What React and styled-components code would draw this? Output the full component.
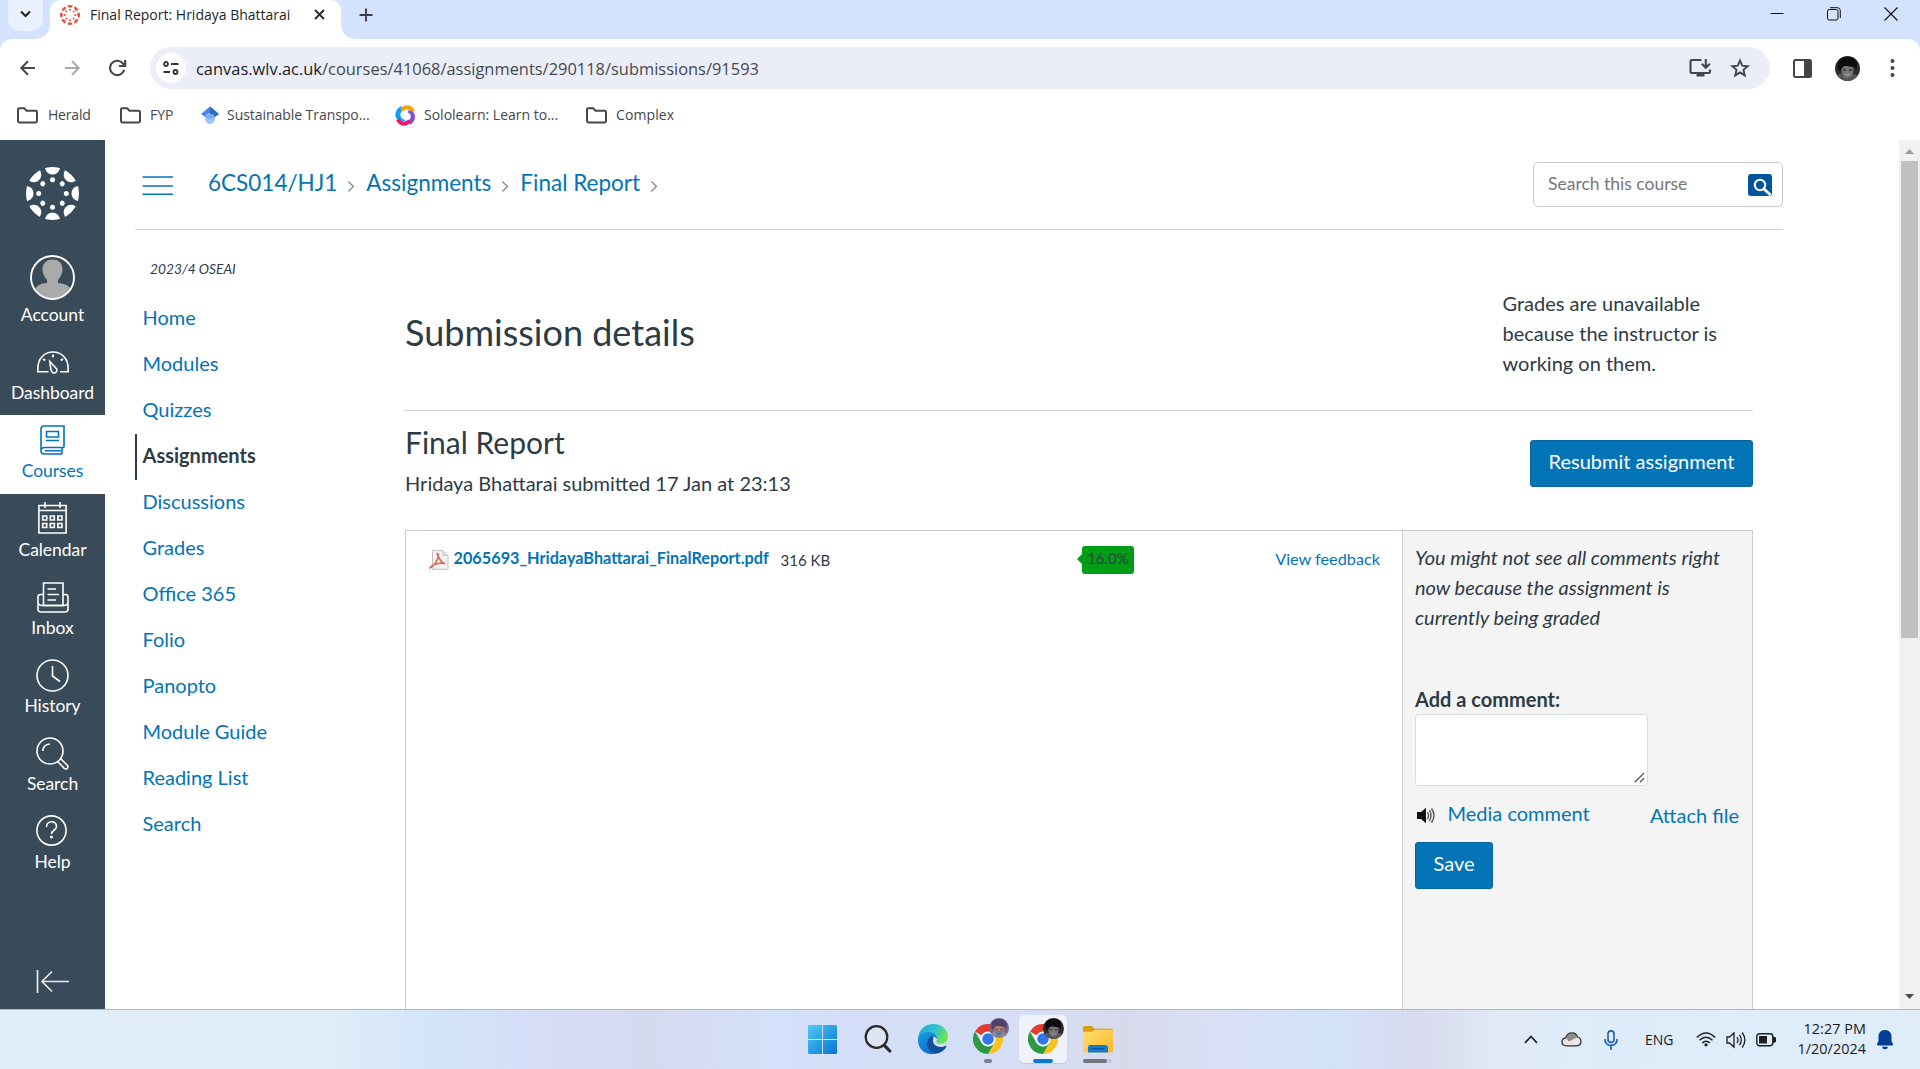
import React from 'react';
import styled, { createGlobalStyle } from 'styled-components';

const UI = '"Open Sans", "Noto Sans", sans-serif';
const LATO = 'Lato, "Liberation Sans", sans-serif';
const LINK = '#0374b5';
const INK = '#2d3b45';
const LINE = '#c7cdd1';

const GlobalStyle = createGlobalStyle`
  *, *::before, *::after { box-sizing: border-box; }
  html, body { margin: 0; padding: 0; overflow: hidden; background: #fff; }
  a { text-decoration: none; color: inherit; }
  h1, h2, p, ul { margin: 0; padding: 0; font-weight: 400; }
  svg { display: block; flex: none; }
  button, input, textarea { margin: 0; font: inherit; }
`;

const Screen = styled.div`
  width: 1920px;
  height: 1069px;
  display: flex;
  flex-direction: column;
  overflow: hidden;
  background: #fff;
`;

/* ---------- browser tab strip ---------- */

const TabStrip = styled.header`
  height: 39px;
  flex: none;
  display: flex;
  background: #d3e2fd;
`;

const TabMenu = styled.button`
  width: 35px;
  height: 31px;
  margin-left: 8px;
  padding: 0 0 3px;
  border: 0;
  border-radius: 0 0 12px 12px;
  background: #e9f0fe;
  display: flex;
  align-items: center;
  justify-content: center;
`;

const Tab = styled.div`
  position: relative;
  width: 291px;
  height: 39px;
  margin-left: 7px;
  padding: 0 16px 10px 10px;
  display: flex;
  align-items: center;
  background: #fff;
  border-radius: 10px 10px 0 0;

  &::before, &::after {
    content: '';
    position: absolute;
    bottom: 0;
    width: 14px;
    height: 14px;
  }
  &::before {
    left: -14px;
    background: radial-gradient(circle at 0 0, transparent 13.5px, #fff 14px);
  }
  &::after {
    right: -14px;
    background: radial-gradient(circle at 100% 0, transparent 13.5px, #fff 14px);
  }
`;

const TabTitle = styled.span`
  margin-left: 10px;
  width: 225px;
  font: 400 14px/20px ${UI};
  color: #1f1f1f;
  white-space: nowrap;
`;

const NewTab = styled.button`
  margin-left: 18px;
  width: 15px;
  height: 29px;
  padding: 0;
  border: 0;
  background: none;
  display: flex;
  align-items: center;
`;

const WindowControls = styled.div`
  margin-left: auto;
  padding-right: 22px;
  height: 27px;
  display: flex;
  align-items: center;
  gap: 43px;
`;

/* ---------- browser toolbar ---------- */

const ToolbarBack = styled.div`
  background: #d3e2fd;
  flex: none;
`;

const Toolbar = styled.div`
  height: 58px;
  padding: 0 25px 0 19px;
  display: flex;
  align-items: center;
  background: #fff;
  border-radius: 12px 12px 0 0;
`;

const NavButtons = styled.div`
  width: 131px;
  display: flex;
  gap: 24px;
`;

const AddressBar = styled.div`
  width: 1620px;
  height: 42px;
  padding: 0 20px 0 6px;
  display: flex;
  align-items: center;
  border-radius: 21px;
  background: #ebeef8;
`;

const SiteInfo = styled.span`
  width: 30px;
  height: 30px;
  border-radius: 50%;
  background: #fff;
  display: flex;
  align-items: center;
  justify-content: center;
`;

const Url = styled.span`
  margin-left: 10px;
  padding-top: 2px;
  flex: 1;
  font: 400 16.4px/24px ${UI};
  letter-spacing: 0.02px;
  color: #46484c;
  white-space: nowrap;
  b { font-weight: 400; color: #1b1c1f; }
`;

const BarActions = styled.div`
  display: flex;
  align-items: center;
  gap: 18px;
`;

const BrowserActions = styled.div`
  margin-left: auto;
  display: flex;
  align-items: center;
`;

const ProfilePhoto = styled.span`
  margin: 0 30px 0 23px;
`;

const Bookmarks = styled.nav`
  height: 43px;
  flex: none;
  padding: 0 0 7px 17px;
  display: flex;
  align-items: center;
`;

const Bookmark = styled.a`
  width: ${(p) => p.$width}px;
  display: flex;
  align-items: center;
  gap: ${(p) => p.$gap || 9}px;
  font: 400 14px/20px ${UI};
  letter-spacing: ${(p) => p.$track || 0}px;
  color: #44474b;
  white-space: nowrap;
`;

/* ---------- page frame ---------- */

const Page = styled.div`
  height: 869px;
  flex: none;
  display: flex;
  overflow: hidden;
  font-family: ${LATO};
  color: ${INK};
`;

const GlobalNav = styled.nav`
  width: 105px;
  flex: none;
  display: flex;
  flex-direction: column;
  background: #394b58;
`;

const LogoSlot = styled.a`
  height: 115px;
  padding: 27px 0 0 26px;
`;

const GlobalItem = styled.a`
  height: ${(p) => p.$height || 78}px;
  padding-top: ${(p) => (p.$avatar ? 0 : 8)}px;
  display: flex;
  flex-direction: column;
  align-items: center;
  font-size: 17.5px;
  line-height: 22px;
  letter-spacing: -0.05px;
  background: ${(p) => (p.$active ? '#fff' : 'transparent')};
  color: ${(p) => (p.$active ? LINK : '#fff')};
`;

const GlobalIcon = styled.span`
  height: ${(p) => (p.$avatar ? 49 : 37)}px;
  padding-bottom: ${(p) => (p.$avatar ? 4 : p.$raised ? 5 : 3)}px;
  display: flex;
  align-items: center;
`;

const Collapse = styled.a`
  margin: auto 0 15px;
  display: flex;
  justify-content: center;
`;

const CourseArea = styled.div`
  width: 1648px;
  margin-left: 30px;
  flex: none;
  display: flex;
  flex-direction: column;
`;

const CourseHeader = styled.div`
  height: 90px;
  flex: none;
  padding-left: 7px;
  display: flex;
  align-items: center;
  border-bottom: 1px solid ${LINE};
`;

const Crumbs = styled.div`
  margin-left: 35px;
  padding-bottom: 4px;
  display: flex;
  align-items: center;
  font-size: 22.5px;
  line-height: 27px;
  color: ${LINK};
`;

const CrumbArrow = styled.svg`
  margin: 7px 12px 0 11px;
`;

const CourseSearch = styled.div`
  margin-left: auto;
  width: 250px;
  height: 45px;
  padding: 0 10px 0 14px;
  display: flex;
  align-items: center;
  justify-content: space-between;
  border: 1px solid #c7cacd;
  border-radius: 5px;
  font-size: 17.5px;
  line-height: 22px;
  color: #73777c;
  span { padding-bottom: 2px; }
`;

const SearchButton = styled.span`
  width: 24px;
  height: 22px;
  border-radius: 3px;
  background: #00549c;
  && { padding: 0; }
`;

const CourseBody = styled.div`
  display: flex;
  flex: 1;
`;

const CourseNav = styled.nav`
  width: 270px;
  padding-top: 30px;
`;

const Term = styled.p`
  height: 36px;
  padding-left: 15px;
  font-size: 13.75px;
  line-height: 18px;
  font-style: italic;
`;

const CourseLink = styled.a`
  display: block;
  height: 46px;
  padding: 9px 0 0 ${(p) => (p.$active ? 5.5 : 7.5)}px;
  border-left: ${(p) => (p.$active ? `2px solid ${INK}` : '0')};
  font-size: 20px;
  line-height: 24px;
  font-weight: ${(p) => (p.$active ? 700 : 400)};
  color: ${(p) => (p.$active ? INK : LINK)};
`;

/* ---------- submission ---------- */

const Content = styled.main`
  width: 1348px;
  display: flex;
  flex-direction: column;
`;

const DetailsHeader = styled.div`
  height: 181px;
  flex: none;
  padding: 58px 0 0;
  display: flex;
  justify-content: space-between;
  border-bottom: 1px solid ${LINE};
`;

const Title = styled.h1`
  padding-top: 23px;
  font-size: 36px;
  line-height: 43px;
`;

const GradeNote = styled.p`
  width: 250.5px;
  padding-right: 30px;
  font-size: 20px;
  line-height: 30px;
`;

const AssignmentHeader = styled.div`
  height: 119px;
  flex: none;
  padding-top: 13px;
  display: flex;
  justify-content: space-between;
`;

const AssignmentName = styled.h2`
  font-size: 30px;
  line-height: 36px;
`;

const Submitted = styled.p`
  padding-top: 8px;
  font-size: 20px;
  line-height: 30px;
`;

const Button = styled.button`
  width: ${(p) => p.$width}px;
  height: 47px;
  margin-top: ${(p) => p.$top || 0}px;
  padding: 0 0 6px;
  border: 1px solid #0a64a0;
  border-radius: 3px;
  background: ${LINK};
  color: #fff;
  font-size: 20px;
  line-height: 24px;
`;

const Panel = styled.section`
  flex: 1;
  display: flex;
  border: 1px solid ${LINE};
  border-bottom: 0;
`;

const Files = styled.div`
  flex: 1;
  padding: 15px 22px 0 23px;
`;

const FileRow = styled.div`
  height: 28px;
  display: flex;
  align-items: center;
  font-size: 16.25px;
  line-height: 20px;
`;

const FileName = styled.a`
  margin-left: 4.5px;
  padding-bottom: 4px;
  width: 327px;
  font-weight: 700;
  color: ${LINK};
  white-space: nowrap;
`;

const FileSize = styled.span`
  width: 301.5px;
  padding-bottom: 1px;
  font-size: 15px;
`;

const Score = styled.span`
  position: relative;
  width: 52px;
  height: 28px;
  border-radius: 3px;
  background: #009d17;
  text-align: center;
  font-size: 15px;
  line-height: 25px;

  &::before {
    content: '';
    position: absolute;
    left: -5px;
    top: 8px;
    border: 5px solid transparent;
    border-left: 0;
    border-right-color: #009d17;
  }
`;

const Feedback = styled.a`
  margin-left: auto;
  padding-bottom: 2px;
  color: ${LINK};
`;

const Comments = styled.aside`
  width: 350px;
  padding: 11px 13px 0 12px;
  border-left: 1px solid ${LINE};
  background: #f4f4f4;
  font-size: 20px;
`;

const Notice = styled.p`
  width: 315px;
  line-height: 30px;
  font-style: italic;
`;

const CommentLabel = styled.label`
  display: block;
  margin-top: 55px;
  height: 27px;
  font-weight: 700;
  line-height: 24px;
`;

const CommentBox = styled.div`
  width: 233px;
  height: 72px;
  padding: 0 2px 2px 0;
  display: flex;
  align-items: flex-end;
  justify-content: flex-end;
  border: 1px solid #d7dde1;
  border-radius: 4px;
  background: #fff;
`;

const CommentTools = styled.div`
  height: 56px;
  padding: 15px 0 0 1px;
  display: flex;
  align-items: flex-start;
  line-height: 24px;
  color: ${LINK};
`;

const MediaLink = styled.a`
  margin-left: 11.5px;
`;

const AttachLink = styled.a`
  margin-left: auto;
  padding-top: 2px;
`;

const SpeakerSlot = styled.span`
  padding-top: 6px;
`;

/* ---------- scrollbar ---------- */

const Scrollbar = styled.div`
  width: 21px;
  margin-left: auto;
  padding: 9px 0 10px;
  display: flex;
  flex-direction: column;
  align-items: center;
  background: #f1f1f1;
`;

const Thumb = styled.div`
  width: 17px;
  height: 477px;
  margin: 7px 0 auto;
  background: #c1c1c1;
`;

/* ---------- taskbar ---------- */

const Taskbar = styled.footer`
  height: 60px;
  flex: none;
  padding: 0 27px 0 795px;
  display: flex;
  border-top: 1px solid #b0b8c8;
  background: linear-gradient(90deg,
    #e1eef8 0px, #dfedf8 330px, #d2e4fb 440px, #d5def8 530px, #d6daef 650px,
    #d3e1fa 770px, #d5def8 850px, #d6def7 1000px, #d8daec 1130px, #d9e0f5 1220px,
    #d2e3fa 1320px, #d8daee 1420px, #e1eaf7 1500px, #deecf9 1600px, #e0edf9 1920px);
`;

const TaskApp = styled.div`
  width: 55px;
  height: 59px;
  display: flex;
  flex-direction: column;
  align-items: center;
`;

const AppTile = styled.span`
  position: relative;
  width: 48px;
  height: 48px;
  margin-top: 5px;
  display: flex;
  align-items: center;
  justify-content: center;
  border-radius: 5px;
  background: ${(p) => (p.$active ? 'rgba(255,255,255,.62)' : 'transparent')};
  box-shadow: ${(p) => (p.$active ? '0 1px 1px rgba(90,100,140,.2)' : 'none')};
`;

const Indicator = styled.i`
  position: absolute;
  bottom: 0;
  width: ${(p) => p.$width}px;
  height: 4px;
  border-radius: 2px;
  background: ${(p) => p.$color};
  box-shadow: ${(p) => (p.$stacked ? '5px 0 0 #c6cadf' : 'none')};
  margin-right: ${(p) => (p.$stacked ? 6 : 0)}px;
`;

const AccountBadge = styled.span`
  position: absolute;
  right: 3px;
  top: 3px;
`;

const Tray = styled.div`
  margin-left: auto;
  height: 59px;
  display: flex;
  align-items: center;
  font: 400 14px/20px ${UI};
  color: #1b1c20;
`;

const TrayCell = styled.span`
  width: ${(p) => p.$width}px;
  display: flex;
`;

const Clock = styled.div`
  width: 94px;
  margin-right: 11px;
  padding-bottom: 2px;
  text-align: right;
  font-size: 14.4px;
  letter-spacing: 0.05px;
  line-height: 19.5px;
`;

/* ---------- drawings ---------- */

const spokes = [0, 45, 90, 135, 180, 225, 270, 315];

function CanvasMark({ size, color, id }) {
  return (
    <svg width={size} height={size} viewBox="-26.5 -26.5 53 53">
      <clipPath id={id}><circle r="26.5" /></clipPath>
      <g clipPath={`url(#${id})`} fill={color}>
        {spokes.map((a) => (
          <g key={a} transform={`rotate(${a})`}>
            <path d="M-8 -28 L8 -28 L7.4 -25 C6.2 -21 3.5 -19 0 -19 C-3.5 -19 -6.2 -21 -7.4 -25 Z" />
            <circle cy="-13.8" r="2.5" />
          </g>
        ))}
      </g>
    </svg>
  );
}

function Portrait({ size, tone, id }) {
  const warm = tone === 'warm';
  return (
    <svg width={size} height={size} viewBox="0 0 25 25">
      <clipPath id={id}><circle cx="12.5" cy="12.5" r="12.5" /></clipPath>
      <g clipPath={`url(#${id})`}>
        <rect width="25" height="25" fill={warm ? '#75658f' : '#2c2c2c'} />
        <path d="M0 25 V20 C4 17 8 18 12 18 C17 17 21 18 25 21 V25Z" fill={warm ? '#8e8795' : '#565656'} />
        <ellipse cx="12.5" cy="14.5" rx="6" ry="7.5" fill={warm ? '#b88070' : '#757575'} />
        <path d="M3.5 14 C1 6 6 0 13 1 C20 0 24 7 21 14 C20.500 11 18 10 16 11 C13 10 9 9 7 12 C6 13 6 15 3.500 14Z" fill={warm ? '#51406a' : '#0c0c0c'} />
        <path d="M8 14h3M14 14h3" stroke={warm ? '#54343b' : '#2f2f2f'} strokeWidth="1.300" />
        <path d={warm ? 'M8 16 L17 16 L15 22 L9 22Z' : 'M10.5 18.5 Q13 20 15 18'} fill={warm ? '#557ba6' : 'none'} stroke={warm ? 'none' : '#b5b5b5'} strokeWidth=".9" />
      </g>
    </svg>
  );
}

const FolderOutline = () => (
  <svg width="21" height="17" viewBox="0 0 21 17" fill="none" stroke="#474747" strokeWidth="2">
    <path d="M1 2.5 Q1 1.2 2.2 1.2 H7.2 L9.4 3.7 H18.8 Q20 3.7 20 5 V14 Q20 15.4 18.8 15.4 H2.2 Q1 15.4 1 14Z" />
  </svg>
);

const ScholarMark = () => (
  <svg width="18" height="19" viewBox="0 0 19 19">
    <path d="M9.5 0 L19 8 L14.5 11 A5.3 5.3 0 0 0 4.5 11 L0 8Z" fill="#4285f4" />
    <path d="M9.5 0 L19 8 L14.5 11 C13 9 12 8 9.5 8Z" fill="#356ac3" />
    <circle cx="9.5" cy="13.2" r="5.2" fill="#a0c3ff" />
    <path d="M4.5 11.6 A5.3 5.3 0 0 1 14.5 11.6 Q9.5 14 4.5 11.6Z" fill="#76a7fa" />
  </svg>
);

const SololearnMark = () => (
  <svg width="21" height="21" viewBox="0 0 21 21">
    <path d="M6.300 1 C-1 4.500 -1.500 13 4.500 16 C7 17.200 9.500 16.500 10.500 15 C5.500 14.500 3.500 9 7.500 5.500Z" fill="#149ef2" />
    <path d="M5.500 4 C8 -1 16.500 -1.500 20 5.500 L16.500 7.500 C14 3.800 10.500 3.500 8 6.500 C7 6 5.500 5.200 5.500 4Z" fill="#f7a416" />
    <path d="M13.500 5.500 C20 4.500 23.500 15 14.800 20 L13.500 15.500 C17 12.500 16.500 8.500 12.500 7.500Z" fill="#7d4fe0" />
    <path d="M1 15 L4.500 13.800 C6.500 17.500 10.500 17.500 13 14.500 C14.500 15 15.500 16 15.200 17.300 C12.500 22.500 4 22 1 15Z" fill="#f5146c" />
  </svg>
);

const ChromeMark = () => (
  <svg width="30" height="30" viewBox="-15 -15 30 30">
    <path d="M0 0 L-13 -7.500 A15 15 0 0 1 13 -7.500Z" fill="#e33b2e" />
    <path d="M0 -7.500 H13 A15 15 0 0 1 0 15 L6.500 3.750Z" fill="#fcc31e" />
    <path d="M-13 -7.500 L-6.500 3.750 L0 7.500 L6.500 3.750 L0 15 A15 15 0 0 1 -13 -7.500Z" fill="#2a9a45" />
    <circle r="7.500" fill="#fff" />
    <circle r="5.800" fill="#2f76e8" />
  </svg>
);

const EdgeMark = () => (
  <svg width="30" height="30" viewBox="0 0 30 30">
    <defs>
      <linearGradient id="edgeTop" x1="0" y1="0" x2="1" y2=".5">
        <stop offset="0" stopColor="#1fa4dc" /><stop offset=".55" stopColor="#2fc2cf" /><stop offset="1" stopColor="#6be553" />
      </linearGradient>
      <linearGradient id="edgeBody" x1="0" y1="0" x2=".6" y2="1">
        <stop offset="0" stopColor="#1a9be2" /><stop offset="1" stopColor="#0a6dcb" />
      </linearGradient>
    </defs>
    <path d="M0 14 C1 5 8 0 15 0 C24 0 30 6 30 12.500 C30 17 27 20 22.500 20 C19 20 17.500 18.600 18.500 17 C20.500 13 17 9 12 9 C6 9 1.500 11 0 14Z" fill="url(#edgeTop)" />
    <path d="M0 15 C1 10 5.500 8 10.500 8 C16 8 19.500 11.500 19.200 15 C15 10 9 14 10 20 C11 26 17 29 19.500 29.200 C9 32.500 -.5 26 0 15Z" fill="url(#edgeBody)" />
    <path d="M15 11.800 C11 13 9 16 9 20 C10 26 15 30 20 29.200 C24 28 26.500 26 28.300 23 C28.700 22 28 21.600 27.400 22 C20 25.500 13 20 15.400 14.300Z" fill="#124f9b" />
  </svg>
);

const ExplorerMark = () => (
  <svg width="30" height="27" viewBox="0 0 30 27">
    <defs>
      <linearGradient id="folderFace" x1="0" y1="0" x2="1" y2="1">
        <stop offset="0" stopColor="#ffdf6b" /><stop offset="1" stopColor="#fcb72b" />
      </linearGradient>
    </defs>
    <path d="M0 1.500 Q0 0 1.500 0 H8.500 L11.500 2.700 H28.500 Q30 2.700 30 4 V8 H0Z" fill="#dc9c0b" />
    <path d="M0 5.800 H9 L12 3.800 H30 V25 Q30 26.500 28.500 26.500 H1.500 Q0 26.500 0 25Z" fill="url(#folderFace)" />
    <path d="M5 26.500 V21.500 Q5 19 7.500 19 H22.500 Q25 19 25 21.500 V26.500Z" fill="#0f7cd0" />
    <rect x="8.500" y="22" width="13" height="1.300" rx=".6" fill="#0c4f91" />
  </svg>
);

const PdfMark = () => (
  <svg width="20" height="20" viewBox="0 0 20 20">
    <path d="M3.500 .6 H14 L19 5.600 V19.300 H3.500Z" fill="#f3f3f3" stroke="#bebebe" />
    <path d="M14 .6 V5.600 H19" fill="#ddd" stroke="#c2c2c2" strokeWidth=".8" />
    <path d="M8 3.500 C10.200 8 10.300 11 15 13.300 M9.300 4 C9.500 9 6.500 15 1 18 M1 17.500 C5 13.500 10 12.600 15.500 13.500" fill="none" stroke="#e2665e" strokeWidth="1.600" strokeLinecap="round" />
  </svg>
);

const thin = { fill: 'none', stroke: 'currentColor', strokeWidth: 1.6 };

const icons = {
  dashboard: (
    <svg width="32" height="23" viewBox="0 0 32 23" {...thin}>
      <path d="M11.500 20.800 H.9 V17 C.9 7.500 7.300 1 16 1 S31.100 7.500 31.100 17 V20.800 H23" />
      <path d="M12.800 10.500 L19.300 17.500 C21 20 18.500 22.800 16 21.800 C14.300 21 14 19.500 13.700 17Z" />
      <path d="M16 3.600 V6.200 M6 8 L8.300 9.300 M26 8 L23.700 9.300" strokeWidth="1.900" />
    </svg>
  ),
  courses: (
    <svg width="25" height="30" viewBox="0 0 25 30" {...thin}>
      <path d="M24 22.500 V1 H4 Q1 1 1 4 V26 Q1 29 4.500 29 H22 M24 22.500 H4.500 Q1 22.500 1 26 M22 22.500 V29 M5 25.800 H21" />
      <path d="M6.500 6.500 H18.500 V12 H6.500Z M6 15.500 H19" />
    </svg>
  ),
  calendar: (
    <svg width="29" height="32" viewBox="0 0 29 32" {...thin}>
      <path d="M.9 3.500 H28.100 V31 H.9Z M.9 8.500 H28.100 M7 0 V6 M22 0 V6" />
      <path d="M4.700 14 h4 v4 h-4Z M12.300 14 h4 v4 h-4Z M19.900 14 h4 v4 h-4Z M4.700 21.500 h4 v4 h-4Z M12.300 21.500 h4 v4 h-4Z M19.900 21.500 h4 v4 h-4Z" strokeWidth="1.700" />
    </svg>
  ),
  inbox: (
    <svg width="32" height="31" viewBox="0 0 32 31" {...thin}>
      <path d="M6.500 23.500 V1 H26 V23.500Z M10.500 7 H19 M10.500 12.500 H22 M10.500 18 H19" />
      <path d="M6.500 12.500 H3.500 Q1 12.500 1 15 V27 Q1 30 4 30 H28 Q31 30 31 27 V15 Q31 12.500 28.500 12.500 H26 M1 21 Q2 23.500 5 23.500 H27 Q30 23.500 31 21" />
    </svg>
  ),
  history: (
    <svg width="33" height="33" viewBox="0 0 33 33" {...thin}>
      <circle cx="16.500" cy="16.500" r="15.500" />
      <path d="M16.500 7 V17 L24 22.500" />
    </svg>
  ),
  search: (
    <svg width="33" height="33" viewBox="0 0 33 33" {...thin}>
      <circle cx="14" cy="14" r="13" />
      <path d="M6.800 14 Q7.200 7.500 13.800 7 M21.500 24.500 L28.300 31.300 Q30 32.500 31.300 31.300 Q32.500 30 31.300 28.300 L24.500 21.500" />
    </svg>
  ),
  help: (
    <svg width="33" height="31" viewBox="0 0 33 31" {...thin}>
      <circle cx="15.500" cy="15.500" r="14.600" />
      <path d="M10.500 12 C10.500 5 20.500 5 20.500 11.500 C20.500 15.500 15.500 15 15.500 19" />
      <circle cx="15.500" cy="22" r="1.100" fill="currentColor" strokeWidth=".8" />
    </svg>
  ),
  account: (
    <svg width="45" height="45" viewBox="0 0 45 45">
      <clipPath id="accountClip"><circle cx="22.500" cy="22.500" r="21" /></clipPath>
      <g clipPath="url(#accountClip)" fill="#aaa">
        <path d="M5 45 V34 Q8 28.500 17 28 V25 Q12.500 20 12.500 14 Q13 4.500 22.500 4.500 Q32 4.500 32.500 14 Q32.500 20 28 25 V28 Q37 28.500 41 34 V45Z" />
      </g>
      <circle cx="22.500" cy="22.500" r="21.500" fill="none" stroke="#fff" strokeWidth="1.900" />
    </svg>
  ),
};

const Crumb = () => (
  <CrumbArrow width="6" height="11" viewBox="0 0 6 11" fill="none" stroke="#73818c" strokeWidth="1.100">
    <path d="M.4 .5 L5.400 5.500 L.4 10.500" />
  </CrumbArrow>
);

const navItems = [
  { key: 'account', label: 'Account', height: 82, avatar: true },
  { key: 'dashboard', label: 'Dashboard' },
  { key: 'courses', label: 'Courses', height: 79, active: true },
  { key: 'calendar', label: 'Calendar', raised: true },
  { key: 'inbox', label: 'Inbox' },
  { key: 'history', label: 'History' },
  { key: 'search', label: 'Search' },
  { key: 'help', label: 'Help', height: 79, raised: true },
];

const courseLinks = ['Home', 'Modules', 'Quizzes', 'Assignments', 'Discussions', 'Grades',
  'Office 365', 'Folio', 'Panopto', 'Module Guide', 'Reading List', 'Search'];

/* ---------- sections ---------- */

function BrowserChrome() {
  return (
    <>
      <TabStrip>
        <TabMenu>
          <svg width="11" height="8" viewBox="0 0 11 8" fill="none" stroke="#1f1f1f" strokeWidth="2"><path d="M1 1.500 L5.500 6 L10 1.500" /></svg>
        </TabMenu>
        <Tab>
          <CanvasMark size={20} color="#e8453c" id="tabMark" />
          <TabTitle>Final Report: Hridaya Bhattarai</TabTitle>
          <svg width="11" height="11" viewBox="0 0 11 11" stroke="#2a2a2a" strokeWidth="1.900"><path d="M1 1 L10 10 M10 1 L1 10" /></svg>
        </Tab>
        <NewTab>
          <svg width="14" height="14" viewBox="0 0 14 14" stroke="#3b3d42" strokeWidth="1.900"><path d="M7 .5 V13.500 M.5 7 H13.500" /></svg>
        </NewTab>
        <WindowControls>
          <svg width="14" height="14" viewBox="0 0 14 14" stroke="#111" strokeWidth="1"><path d="M.5 6.500 H13.500" /></svg>
          <svg width="14" height="14" viewBox="0 0 14 14" fill="none" stroke="#111">
            <rect x=".5" y="2.500" width="10.500" height="10.500" rx="1.800" />
            <path d="M3 .7 H10.500 Q13.300 .7 13.300 3.500 V11" />
          </svg>
          <svg width="14" height="14" viewBox="0 0 14 14" stroke="#111" strokeWidth="1.100"><path d="M.5 .5 L13.500 13.500 M13.500 .5 L.5 13.500" /></svg>
        </WindowControls>
      </TabStrip>

      <ToolbarBack>
        <Toolbar>
          <NavButtons>
            <svg width="18" height="18" viewBox="0 0 18 18" fill="none" stroke="#474747" strokeWidth="2"><path d="M16 9 H3 M9 2.300 L2.300 9 L9 15.700" /></svg>
            <svg width="20" height="18" viewBox="0 0 20 18" fill="none" stroke="#a9a9a9" strokeWidth="2"><path d="M4 9 H17 M11 2.300 L17.700 9 L11 15.700" /></svg>
            <svg width="22" height="18" viewBox="0 0 22 18" fill="none" stroke="#474747" strokeWidth="2.100"><path d="M19.200 10.800 A7.200 7.200 0 1 1 17.500 4 L19.700 6.500 M20.200 1 V7 H14" /></svg>
          </NavButtons>
          <AddressBar>
            <SiteInfo>
              <svg width="16" height="14" viewBox="0 0 16 14" fill="none" stroke="#333" strokeWidth="1.800">
                <circle cx="3" cy="3" r="2" /><path d="M8 3 H15.500 M.5 11 H7" /><circle cx="12.500" cy="11" r="2" />
              </svg>
            </SiteInfo>
            <Url><b>canvas.wlv.ac.uk</b>/courses/41068/assignments/290118/submissions/91593</Url>
            <BarActions>
              <svg width="23" height="20" viewBox="0 0 23 20" fill="none" stroke="#444649" strokeWidth="2.100">
                <path d="M12.500 2 H3 Q1.500 2 1.500 3.500 V13.500 Q1.500 15 3 15 H19.500 Q21 15 21 13.500 V11.500 M16.800 1 V9 M12.800 5.800 L16.800 9.800 L20.800 5.800" />
                <path d="M7.500 15 H15.500 V18.500 H7.500Z" fill="#444649" stroke="none" />
              </svg>
              <svg width="20" height="20" viewBox="0 0 20 20" fill="none" stroke="#444649" strokeWidth="1.900">
                <path d="M10 2.500 L12.200 7.700 L17.800 8.200 L13.500 11.900 L14.800 17.400 L10 14.400 L5.200 17.400 L6.500 11.900 L2.200 8.200 L7.800 7.700Z" />
              </svg>
            </BarActions>
          </AddressBar>
          <BrowserActions>
            <svg width="19" height="19" viewBox="0 0 19 19"><rect x="1" y="1" width="17" height="17" rx="1.500" fill="#fff" stroke="#444649" strokeWidth="2" /><path d="M11 1 H18 V18 H11Z" fill="#444649" /></svg>
            <ProfilePhoto><Portrait size={25} tone="grey" id="toolbarFace" /></ProfilePhoto>
            <svg width="5" height="18" viewBox="0 0 5 18" fill="#444649"><circle cx="2.500" cy="2" r="2" /><circle cx="2.500" cy="9" r="2" /><circle cx="2.500" cy="16" r="2" /></svg>
          </BrowserActions>
        </Toolbar>
      </ToolbarBack>

      <Bookmarks>
        <Bookmark $width={103} $gap={10} $track={-0.2}><FolderOutline />Herald</Bookmark>
        <Bookmark $width={81}><FolderOutline />FYP</Bookmark>
        <Bookmark $width={194} $gap={8} $track={-0.05}><ScholarMark />Sustainable Transpo...</Bookmark>
        <Bookmark $width={191} $gap={8}><SololearnMark />Sololearn: Learn to...</Bookmark>
        <Bookmark $width={100} $track={0.1}><FolderOutline />Complex</Bookmark>
      </Bookmarks>
    </>
  );
}

function Sidebar() {
  return (
    <GlobalNav>
      <LogoSlot><CanvasMark size={53} color="#fff" id="navMark" /></LogoSlot>
      {navItems.map((n) => (
        <GlobalItem key={n.key} $height={n.height} $active={n.active} $avatar={n.avatar}>
          <GlobalIcon $avatar={n.avatar} $raised={n.raised}>{icons[n.key]}</GlobalIcon>
          {n.label}
        </GlobalItem>
      ))}
      <Collapse>
        <svg width="33" height="25" viewBox="0 0 33 25" fill="none" stroke="#e5e9ec" strokeWidth="1.700">
          <path d="M1.500 1 V24 M33 12.500 H6 M16 2.500 L6 12.500 L16 22.500" />
        </svg>
      </Collapse>
    </GlobalNav>
  );
}

function Submission() {
  return (
    <Content>
      <DetailsHeader>
        <Title>Submission details</Title>
        <GradeNote>Grades are unavailable because the instructor is working on them.</GradeNote>
      </DetailsHeader>
      <AssignmentHeader>
        <div>
          <AssignmentName>Final Report</AssignmentName>
          <Submitted>Hridaya Bhattarai submitted 17 Jan at 23:13</Submitted>
        </div>
        <Button $width={223} $top={16}>Resubmit assignment</Button>
      </AssignmentHeader>
      <Panel>
        <Files>
          <FileRow>
            <PdfMark />
            <FileName>2065693_HridayaBhattarai_FinalReport.pdf</FileName>
            <FileSize>316 KB</FileSize>
            <Score>16.0%</Score>
            <Feedback>View feedback</Feedback>
          </FileRow>
        </Files>
        <Comments>
          <Notice>You might not see all comments right now because the assignment is currently being graded</Notice>
          <CommentLabel>Add a comment:</CommentLabel>
          <CommentBox>
            <svg width="11" height="11" viewBox="0 0 11 11" stroke="#555" strokeWidth="1.300"><path d="M.8 10.200 L10 1 M6 10.200 L10 6.200" /></svg>
          </CommentBox>
          <CommentTools>
            <SpeakerSlot>
              <svg width="20" height="17" viewBox="0 0 20 17">
                <path d="M1 5 H5 L10 .8 V16.200 L5 12 H1Z" fill="#111" />
                <path d="M11.500 5 Q13.500 8.500 11.500 12 M13.500 3 Q16.500 8.500 13.500 14 M15.500 1.500 Q20.500 8.500 15.500 15.500" fill="none" stroke="#4b4b4b" strokeWidth="1.300" />
              </svg>
            </SpeakerSlot>
            <MediaLink>Media comment</MediaLink>
            <AttachLink>Attach file</AttachLink>
          </CommentTools>
          <Button $width={78}>Save</Button>
        </Comments>
      </Panel>
    </Content>
  );
}

function WindowsTaskbar() {
  return (
    <Taskbar>
      <TaskApp>
        <AppTile>
          <svg width="30" height="29" viewBox="0 0 30 29">
            <defs><linearGradient id="winFill" x1="0" y1="0" x2="1" y2="1"><stop offset="0" stopColor="#4fcaf8" /><stop offset="1" stopColor="#0573d0" /></linearGradient></defs>
            <path d="M1 0 H14 V14 H0 V1Z M15 0 H28 L29 1 V14 H15Z M0 15 H14 V29 H1 L0 28Z M15 15 H29 V28 L28 29 H15Z" fill="url(#winFill)" />
          </svg>
        </AppTile>
      </TaskApp>
      <TaskApp>
        <AppTile>
          <svg width="28" height="28" viewBox="0 0 28 28" fill="none" stroke="#292929" strokeLinecap="round"><circle cx="12.500" cy="12" r="10.800" strokeWidth="2.200" fill="#e6e9f2" fillOpacity=".5" /><path d="M20.300 20.300 L25.800 26" strokeWidth="3.200" /></svg>
        </AppTile>
      </TaskApp>
      <TaskApp><AppTile><EdgeMark /></AppTile></TaskApp>
      <TaskApp>
        <AppTile>
          <ChromeMark />
          <AccountBadge><Portrait size={20} tone="warm" id="badgeWarm" /></AccountBadge>
          <Indicator $width={8} $color="#7d808c" />
        </AppTile>
      </TaskApp>
      <TaskApp>
        <AppTile $active>
          <ChromeMark />
          <AccountBadge><Portrait size={21} tone="grey" id="badgeGrey" /></AccountBadge>
          <Indicator $width={20} $color="#0b78d4" />
        </AppTile>
      </TaskApp>
      <TaskApp><AppTile><ExplorerMark /><Indicator $width={24} $color="#74767f" $stacked /></AppTile></TaskApp>

      <Tray>
        <TrayCell $width={37}>
          <svg width="14" height="9" viewBox="0 0 14 9" fill="none" stroke="#222" strokeWidth="1.700"><path d="M1 7.800 L7 1.500 L13 7.800" /></svg>
        </TrayCell>
        <TrayCell $width={43}>
          <svg width="21" height="15" viewBox="0 0 21 15">
            <path d="M5.500 13.800 Q1 13.800 .9 9.800 Q1 6.500 4.500 5.800 Q6.500 1 11 1 Q15 1 16.500 5 Q20 6 20 9.500 Q19.800 13.800 15.500 13.800Z" fill="#e9e6e3" stroke="#333" strokeWidth="1.300" />
            <path d="M4.800 6.200 Q7 1.600 11 1.600 Q14.500 1.800 16 5.500 L7.500 9.500 Q6.500 7 4.800 6.200Z" fill="#8e8d8c" />
          </svg>
        </TrayCell>
        <TrayCell $width={41}>
          <svg width="14" height="20" viewBox="0 0 14 20" fill="none" stroke="#1a5fb4" strokeWidth="1.600"><rect x="4" y=".9" width="6" height="11.500" rx="3" /><path d="M.9 9 Q1 15.300 7 15.300 T13.100 9 M7 15.500 V20" /></svg>
        </TrayCell>
        <TrayCell $width={51}>ENG</TrayCell>
        <TrayCell $width={30}>
          <svg width="20" height="15" viewBox="0 0 20 15" fill="none" stroke="#1f1f24" strokeWidth="1.400">
            <path d="M.8 5.500 Q10 -3.500 19.200 5.500 M3.500 8.300 Q10 2 16.500 8.300 M6.200 11 Q10 7.300 13.800 11" /><circle cx="10" cy="12.800" r="1.600" fill="#1f1f24" stroke="none" />
          </svg>
        </TrayCell>
        <TrayCell $width={30}>
          <svg width="21" height="18" viewBox="0 0 21 18" fill="none" stroke="#1f1f24" strokeWidth="1.300">
            <path d="M1 6 H3.500 L8 2 V16 L3.500 12 H1Z M11 6 Q13 9 11 12 M13.500 3.800 Q17 9 13.500 14.200 M16.200 1.500 Q21.500 9 16.200 16.500" />
          </svg>
        </TrayCell>
        <TrayCell $width={16}>
          <svg width="20" height="14" viewBox="0 0 20 14" fill="none" stroke="#1f1f24" strokeWidth="1.400"><rect x=".8" y=".8" width="16" height="11.900" rx="2.600" /><path d="M3 3 H11 V10.500 H3Z" fill="#1f1f24" stroke="none" /><path d="M17.500 4.500 Q20 4.500 20 6.800 T17.500 9Z" fill="#1f1f24" /></svg>
        </TrayCell>
        <Clock>12:27 PM<br />1/20/2024</Clock>
        <svg width="16" height="20" viewBox="0 0 16 20" fill="#003e92"><path d="M8 0 C3.800 0 1.500 3 1.500 6.500 V11 L0 14 Q0 15.500 1 15.500 H15 Q16 15.500 16 14 L14.500 11 V6.500 C14.500 3 12.200 0 8 0Z M5 16.800 H11 Q10.500 19.300 8 19.300 T5 16.800Z" /></svg>
      </Tray>
    </Taskbar>
  );
}

export default function App() {
  return (
    <Screen>
      <GlobalStyle />
      <BrowserChrome />
      <Page>
        <Sidebar />
        <CourseArea>
          <CourseHeader>
            <svg width="31" height="20" viewBox="0 0 31 20" stroke={LINK} strokeWidth="1.500"><path d="M.5 2 H31 M.5 11 H31 M.5 19.200 H31" /></svg>
            <Crumbs>
              <a>6CS014/HJ1</a><Crumb />
              <a>Assignments</a><Crumb />
              <a>Final Report</a><Crumb />
            </Crumbs>
            <CourseSearch>
              <span>Search this course</span>
              <SearchButton>
                <svg width="24" height="22" viewBox="0 0 24 22" fill="none" stroke="#fff"><circle cx="12" cy="11" r="5.200" strokeWidth="2.100" /><path d="M16 15 L22.500 21" strokeWidth="2.900" /></svg>
              </SearchButton>
            </CourseSearch>
          </CourseHeader>
          <CourseBody>
            <CourseNav>
              <Term>2023/4 OSEAI</Term>
              {courseLinks.map((label) => (
                <CourseLink key={label} $active={label === 'Assignments'}>{label}</CourseLink>
              ))}
            </CourseNav>
            <Submission />
          </CourseBody>
        </CourseArea>
        <Scrollbar>
          <svg width="9" height="5" viewBox="0 0 9 5" fill="#9c9c9c"><path d="M0 5 L4.500 0 L9 5Z" /></svg>
          <Thumb />
          <svg width="9" height="5" viewBox="0 0 9 5" fill="#4b4b4b"><path d="M0 0 L4.500 5 L9 0Z" /></svg>
        </Scrollbar>
      </Page>
      <WindowsTaskbar />
    </Screen>
  );
}
